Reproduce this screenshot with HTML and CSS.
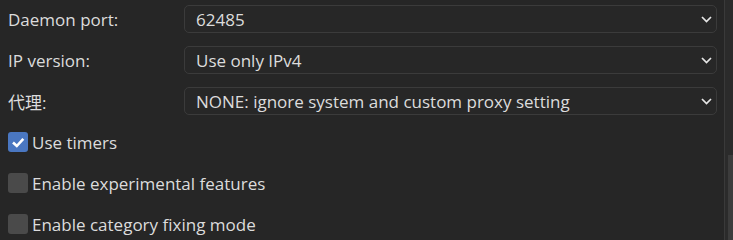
FILE: index.html
```html
<!DOCTYPE html>
<html>
<head>
<meta charset="utf-8">
<link rel="stylesheet" href="styles.css">
</head>
<body>
<div class="page">
  <div class="content">
    <div class="form">
      <label class="label">Daemon port:</label>
      <div class="combo"><span>62485</span><svg class="chev" width="11" height="7" viewBox="0 0 11 7"><path d="M1 1 L5.5 5.5 L10 1" fill="none" stroke="#e6e6e6" stroke-width="1.7"/></svg></div>
      <label class="label">IP version:</label>
      <div class="combo"><span>Use only IPv4</span><svg class="chev" width="11" height="7" viewBox="0 0 11 7"><path d="M1 1 L5.5 5.5 L10 1" fill="none" stroke="#e6e6e6" stroke-width="1.7"/></svg></div>
      <label class="label">代理:</label>
      <div class="combo"><span>NONE: ignore system and custom proxy setting</span><svg class="chev" width="11" height="7" viewBox="0 0 11 7"><path d="M1 1 L5.5 5.5 L10 1" fill="none" stroke="#e6e6e6" stroke-width="1.7"/></svg></div>
    </div>
    <div class="checks">
      <div class="check"><span class="box on"><svg width="20" height="20" viewBox="0 0 20 20"><path d="M5 10.5 L8.8 14 L15.3 6.8" fill="none" stroke="#fff" stroke-width="2.6"/></svg></span><span>Use timers</span></div>
      <div class="check"><span class="box"></span><span>Enable experimental features</span></div>
      <div class="check"><span class="box"></span><span>Enable category fixing mode</span></div>
    </div>
  </div>
  <div class="scrollbar"><div class="spacer"></div><div class="handle"></div></div>
</div>
</body>
</html>
```
FILE: styles.css
```css
html, body {
  margin: 0;
  padding: 0;
  background: #262626;
  width: 733px;
  height: 240px;
  overflow: hidden;
}
body {
  font-family: "Open Sans", "Noto Sans CJK SC", sans-serif;
  font-size: 17px;
  color: #dcdcdc;
}
.page {
  display: flex;
  height: 240px;
}
.content {
  flex: 1;
  padding: 5px 7px 0 8px;
}
.form {
  display: grid;
  grid-template-columns: 176px 1fr;
  row-gap: 13px;
  align-items: center;
}
.combo {
  height: 26px;
  border: 1px solid #3b3b3b;
  border-radius: 5px;
  background: #272727;
  display: flex;
  align-items: center;
  justify-content: space-between;
  padding: 0 4px 0 11px;
}
.chev { display: block; }
.checks {
  display: flex;
  flex-direction: column;
  gap: 21px;
  padding-top: 17px;
}
.check {
  display: flex;
  align-items: center;
  gap: 4px;
  height: 20px;
}
.box {
  width: 20px;
  height: 20px;
  border-radius: 3px;
  background: #4a4a4a;
  display: flex;
  align-items: center;
  justify-content: center;
}
.box.on { background: #4a77c1; }
.box svg { display: block; }
.scrollbar {
  width: 8px;
  border-left: 1px solid #3a3a3a;
  background: #2b2b2b;
  display: flex;
  flex-direction: column;
}
.spacer { height: 155px; }
.handle {
  flex: 1;
  margin-left: 3px;
  background: #3c3c3c;
}
```
